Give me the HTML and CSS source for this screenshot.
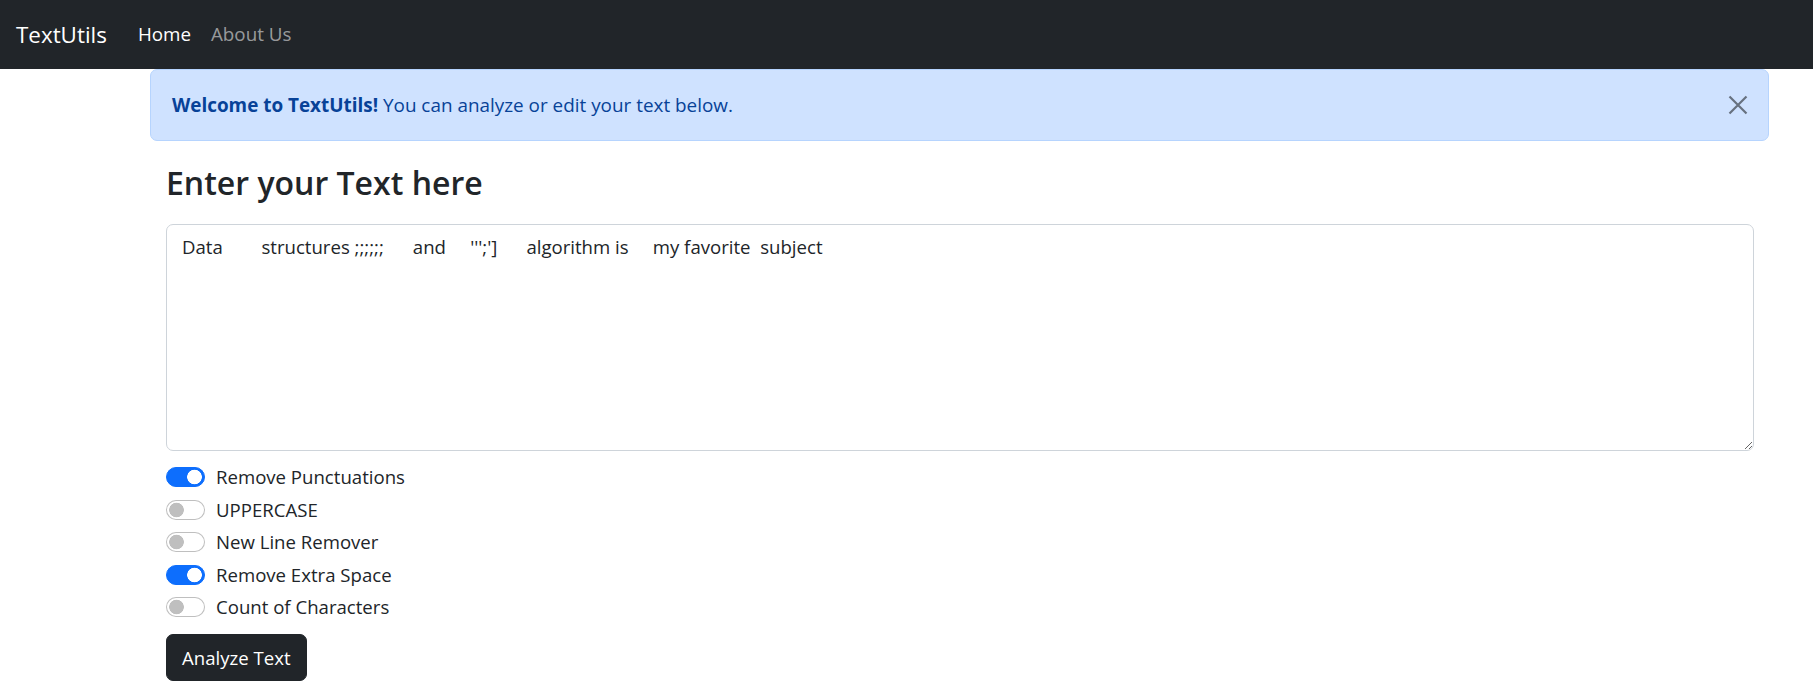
FILE: index.html
```html
<!DOCTYPE html>
<html lang="en">
<head>
<meta charset="utf-8">
<title>TextUtils</title>
<link rel="stylesheet" href="styles.css">
</head>
<body>
<nav class="navbar">
  <a class="brand" href="#">TextUtils</a>
  <ul class="nav-links">
    <li><a class="nav-link active" href="#">Home</a></li>
    <li><a class="nav-link" href="#">About Us</a></li>
  </ul>
</nav>
<div class="alert">
  <p class="alert-text"><strong>Welcome to TextUtils!</strong> You can analyze or edit your text below.</p>
  <button class="btn-close" type="button" aria-label="Close">
    <svg viewBox="0 0 20 20" width="20" height="20" aria-hidden="true"><path d="M1.5 1.5 L18.5 18.5 M18.5 1.5 L1.5 18.5" /></svg>
  </button>
</div>
<main class="container">
  <h2 class="title">Enter your Text here</h2>
  <textarea class="text-box" rows="8">Data        structures ;;;;;;      and     ''';']      algorithm is     my favorite  subject</textarea>
  <div class="options">
    <label class="switch-row"><input type="checkbox" class="switch" checked><span>Remove Punctuations</span></label>
    <label class="switch-row"><input type="checkbox" class="switch"><span>UPPERCASE</span></label>
    <label class="switch-row"><input type="checkbox" class="switch"><span>New Line Remover</span></label>
    <label class="switch-row"><input type="checkbox" class="switch" checked><span>Remove Extra Space</span></label>
    <label class="switch-row"><input type="checkbox" class="switch"><span>Count of Characters</span></label>
  </div>
  <button class="btn-dark" type="button">Analyze Text</button>
</main>
</body>
</html>
```
FILE: styles.css
```css
* { box-sizing: border-box; }

body {
  margin: 0;
  font-family: "Open Sans", "Noto Sans", sans-serif;
  font-size: 18.6px;
  line-height: 1.5;
  color: #212529;
  background: #fff;
}

.navbar {
  height: 69px;
  background: #212529;
  display: flex;
  align-items: center;
  padding: 0 16px;
}

.brand {
  font-size: 22.4px;
  color: #fff;
  text-decoration: none;
  margin-right: 21px;
}

.nav-links {
  display: flex;
  list-style: none;
  margin: 0;
  padding: 0;
  gap: 0;
}

.nav-link {
  display: block;
  padding: 0 10px;
  font-size: 18.8px;
  color: rgba(255, 255, 255, 0.55);
  text-decoration: none;
}

.nav-link.active { color: #fff; }

.alert {
  display: flex;
  align-items: center;
  justify-content: space-between;
  margin: 0 44px 0 150px;
  height: 72px;
  padding: 20px 20px 20px 21px;
  background: #cfe2ff;
  border: 1px solid #b6d4fe;
  border-radius: 7px;
  color: #084298;
}

.alert-text {
  margin: 0;
  font-size: 18.9px;
  line-height: 30px;
}

.alert-text strong { font-weight: 700; }

.btn-close {
  width: 20px;
  height: 20px;
  padding: 0;
  border: 0;
  background: transparent;
  display: flex;
}

.btn-close svg {
  stroke: #000;
  stroke-opacity: 0.5;
  stroke-width: 2.2;
  fill: none;
}

.container {
  margin: 0 59px 0 166px;
}

.title {
  margin: 22px 0 21px;
  font-size: 32px;
  line-height: 40px;
  font-weight: 600;
}

.text-box {
  display: block;
  width: 100%;
  height: 227px;
  padding: 7.5px 15px;
  font: inherit;
  line-height: 1.5;
  color: #212529;
  border: 1px solid #ced4da;
  border-radius: 7px;
  resize: vertical;
}

.options {
  margin-top: 11px;
}

.switch-row {
  display: flex;
  align-items: center;
  height: 30px;
  margin-bottom: 2.6px;
}

.switch {
  appearance: none;
  -webkit-appearance: none;
  width: 39px;
  height: 20px;
  margin: 0 11px 0 0;
  border: 1px solid rgba(0, 0, 0, 0.25);
  border-radius: 10px;
  background-color: #fff;
  background-image: radial-gradient(circle at 9.5px 50%, rgba(0, 0, 0, 0.25) 7px, transparent 7.6px);
}

.switch:checked {
  background-color: #0d6efd;
  border-color: #0d6efd;
  background-image: radial-gradient(circle at calc(100% - 9.5px) 50%, #fff 7px, transparent 7.6px);
}

.btn-dark {
  margin-top: 9.5px;
  padding: 7.5px 15px;
  font: inherit;
  line-height: 30px;
  color: #fff;
  background: #212529;
  border: 1px solid #212529;
  border-radius: 7px;
}
```
